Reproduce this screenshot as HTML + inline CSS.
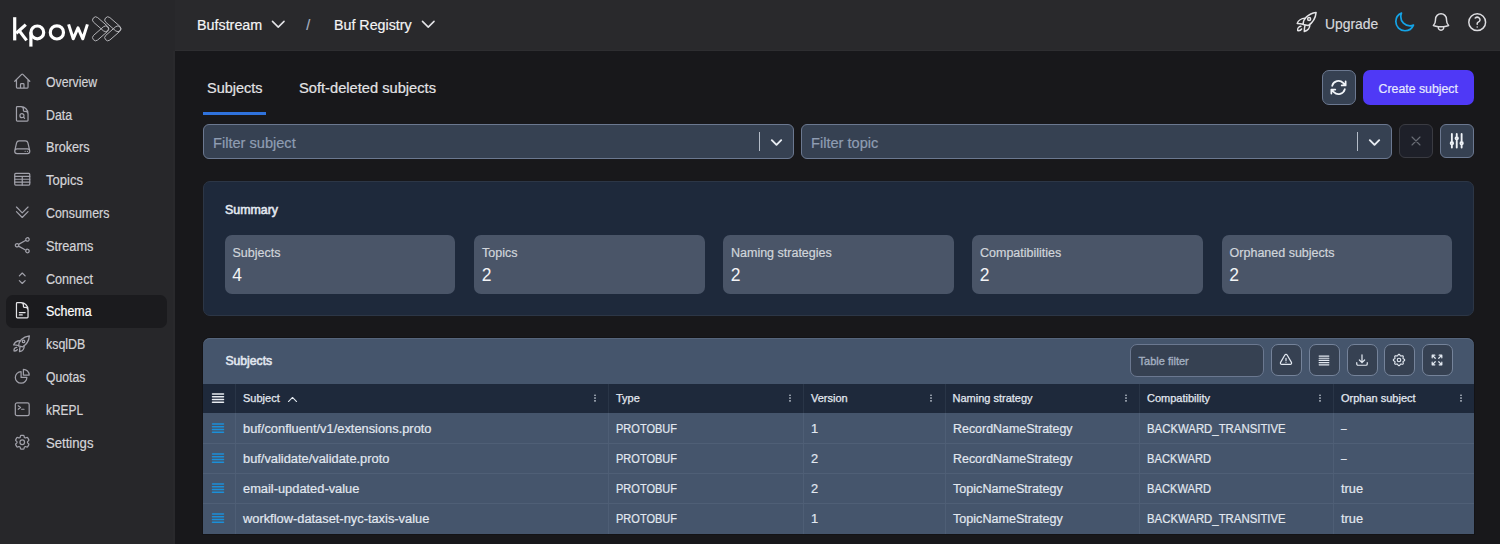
<!DOCTYPE html>
<html><head><meta charset="utf-8"><style>
*{box-sizing:border-box;margin:0;padding:0}
html,body{width:1500px;height:544px;overflow:hidden;background:#18181b;font-family:"Liberation Sans",sans-serif;}
.a{position:absolute}
.t{position:absolute;white-space:nowrap;line-height:1;-webkit-text-stroke-width:0.2px}
svg{position:absolute;overflow:visible}
.ic{fill:none;stroke-linecap:round;stroke-linejoin:round}
</style></head><body>
<div class="a" style="left:0px;top:0px;width:175px;height:544px;background:#27272a;border-radius:0px;"></div>
<div class="a" style="left:173px;top:51px;width:2px;height:493px;background:#29292c;border-radius:0px;"></div>
<div class="a" style="left:175px;top:0px;width:1325px;height:51px;background:#29292c;border-radius:0px;"></div>
<div class="a" style="left:175px;top:50px;width:1325px;height:1px;background:#2e2e31;border-radius:0px;"></div>
<svg style="left:0;top:0;width:174px;height:51px" viewBox="0 0 174 51"><g fill="none" stroke="#ffffff" stroke-width="3.2" stroke-linecap="butt" stroke-linejoin="round"><path d="M14.7 17.2V40.4"/><path d="M25.8 24.6L16.2 33.2"/><path d="M19.2 30.6L26.6 40.4"/><circle cx="37.3" cy="32.4" r="6.4"/><path d="M30.9 32.4V46.6"/><circle cx="56.9" cy="32.4" r="6.6"/><path d="M68.6 24.4L73.2 38.8L78 27.8L82.8 38.8L87.4 24.4" stroke-width="3.0"/></g><g fill="none" stroke="#b4b4b8" stroke-width="1.0"><path d="M93.57 22.24L103.57 30.94A3.1 3.1 0 0 0 107.63 26.26L97.63 17.56A3.1 3.1 0 0 0 93.57 22.24Z"/><path d="M103.57 26.66L93.57 35.36A3.1 3.1 0 0 0 97.63 40.04L107.63 31.34A3.1 3.1 0 0 0 103.57 26.66Z"/><path d="M105.77 22.24L115.77 30.94A3.1 3.1 0 0 0 119.83 26.26L109.83 17.56A3.1 3.1 0 0 0 105.77 22.24Z"/><path d="M115.77 26.66L105.77 35.36A3.1 3.1 0 0 0 109.83 40.04L119.83 31.34A3.1 3.1 0 0 0 115.77 26.66Z"/></g></svg>
<div class="a" style="left:5.5px;top:294.5px;width:161px;height:33px;background:#1b1b1e;border-radius:7px;"></div>
<div class="t" style="left:46px;top:74.85px;font-size:14px;color:#d4d4d8;font-weight:400;letter-spacing:0px;transform:scaleX(0.876);transform-origin:0 0;">Overview</div>
<svg style="left:13.05px;top:71.75px;width:18.5px;height:18.5px" viewBox="0 0 24 24" class="ic" stroke="#a1a1aa" stroke-width="1.6" ><path d="m2.25 12 8.954-8.955c.44-.439 1.152-.439 1.591 0L21.75 12M4.5 9.75v10.125c0 .621.504 1.125 1.125 1.125H9.75v-4.875c0-.621.504-1.125 1.125-1.125h2.25c.621 0 1.125.504 1.125 1.125V21h4.125c.621 0 1.125-.504 1.125-1.125V9.75M8.25 21h8.25"/></svg>
<div class="t" style="left:46px;top:107.65px;font-size:14px;color:#d4d4d8;font-weight:400;letter-spacing:0px;transform:scaleX(0.881);transform-origin:0 0;">Data</div>
<svg style="left:13.05px;top:104.75px;width:18.5px;height:18.5px" viewBox="0 0 24 24" class="ic" stroke="#a1a1aa" stroke-width="1.6" ><path d="M19.5 14.25v-2.625a3.375 3.375 0 0 0-3.375-3.375h-1.5A1.125 1.125 0 0 1 13.5 7.125v-1.5a3.375 3.375 0 0 0-3.375-3.375H8.25m5.231 13.481L15 17.25m-4.5-15H5.625c-.621 0-1.125.504-1.125 1.125v16.5c0 .621.504 1.125 1.125 1.125h12.75c.621 0 1.125-.504 1.125-1.125V11.25a9 9 0 0 0-9-9Zm3.75 11.625a2.625 2.625 0 1 1-5.25 0 2.625 2.625 0 0 1 5.25 0Z"/></svg>
<div class="t" style="left:46px;top:140.45px;font-size:14px;color:#d4d4d8;font-weight:400;letter-spacing:0px;transform:scaleX(0.903);transform-origin:0 0;">Brokers</div>
<svg style="left:13.05px;top:137.75px;width:18.5px;height:18.5px" viewBox="0 0 24 24" class="ic" stroke="#a1a1aa" stroke-width="1.6" ><path d="M21.75 17.25v-.228a4.5 4.5 0 0 0-.12-1.03l-2.268-9.64a3.375 3.375 0 0 0-3.285-2.602H7.923a3.375 3.375 0 0 0-3.285 2.602l-2.268 9.64a4.5 4.5 0 0 0-.12 1.03v.228m19.5 0a3 3 0 0 1-3 3H5.25a3 3 0 0 1-3-3m19.5 0a3 3 0 0 0-3-3H5.25a3 3 0 0 0-3 3m16.5 0h.008v.008h-.008v-.008Zm-3 0h.008v.008h-.008v-.008Z"/></svg>
<div class="t" style="left:46px;top:173.25px;font-size:14px;color:#d4d4d8;font-weight:400;letter-spacing:0px;transform:scaleX(0.93);transform-origin:0 0;">Topics</div>
<svg style="left:13.05px;top:170.25px;width:18.5px;height:18.5px" viewBox="0 0 24 24" class="ic" stroke="#a1a1aa" stroke-width="1.6" ><rect x="2.25" y="4.5" width="19.5" height="15" rx="1.2"/><path d="M2.25 8.25h19.5M2.25 12h19.5M2.25 15.75h19.5M12 8.25v11.25"/></svg>
<div class="t" style="left:46px;top:206.05px;font-size:14px;color:#d4d4d8;font-weight:400;letter-spacing:0px;transform:scaleX(0.885);transform-origin:0 0;">Consumers</div>
<svg style="left:13.05px;top:203.05px;width:18.5px;height:18.5px" viewBox="0 0 24 24" class="ic" stroke="#a1a1aa" stroke-width="1.6" ><path d="m4.5 5.25 7.5 7.5 7.5-7.5m-15 6 7.5 7.5 7.5-7.5"/></svg>
<div class="t" style="left:46px;top:238.85px;font-size:14px;color:#d4d4d8;font-weight:400;letter-spacing:0px;transform:scaleX(0.91);transform-origin:0 0;">Streams</div>
<svg style="left:13.05px;top:236.25px;width:18.5px;height:18.5px" viewBox="0 0 24 24" class="ic" stroke="#a1a1aa" stroke-width="1.6" ><path d="M7.217 10.907a2.25 2.25 0 1 0 0 2.186m0-2.186c.18.324.283.696.283 1.093s-.103.77-.283 1.093m0-2.186 9.566-5.314m-9.566 7.5 9.566 5.314m0 0a2.25 2.25 0 1 0 3.935 2.186 2.25 2.25 0 0 0-3.935-2.186Zm0-12.814a2.25 2.25 0 1 0 3.933-2.185 2.25 2.25 0 0 0-3.933 2.185Z"/></svg>
<div class="t" style="left:46px;top:271.65px;font-size:14px;color:#d4d4d8;font-weight:400;letter-spacing:0px;transform:scaleX(0.9);transform-origin:0 0;">Connect</div>
<svg style="left:13.05px;top:269.15px;width:18.5px;height:18.5px" viewBox="0 0 24 24" class="ic" stroke="#a1a1aa" stroke-width="1.6" ><path d="M8.25 15 12 18.75 15.75 15m-7.5-6L12 5.25 15.75 9"/></svg>
<div class="t" style="left:46px;top:304.45px;font-size:14px;color:#ffffff;font-weight:400;letter-spacing:0px;transform:scaleX(0.887);transform-origin:0 0;">Schema</div>
<svg style="left:13.05px;top:301.35px;width:18.5px;height:18.5px" viewBox="0 0 24 24" class="ic" stroke="#e4e4e7" stroke-width="1.6" ><path d="M19.5 14.25v-2.625a3.375 3.375 0 0 0-3.375-3.375h-1.5A1.125 1.125 0 0 1 13.5 7.125v-1.5a3.375 3.375 0 0 0-3.375-3.375H8.25m0 12.75h7.5m-7.5 3H12M10.5 2.25H5.625c-.621 0-1.125.504-1.125 1.125v17.25c0 .621.504 1.125 1.125 1.125h12.75c.621 0 1.125-.504 1.125-1.125V11.25a9 9 0 0 0-9-9Z"/></svg>
<div class="t" style="left:46px;top:337.25px;font-size:14px;color:#d4d4d8;font-weight:400;letter-spacing:0px;transform:scaleX(0.885);transform-origin:0 0;">ksqlDB</div>
<svg style="left:11.2px;top:332.5px;width:21.6px;height:21.6px" viewBox="0 0 26 26" class="ic" stroke="#a1a1aa" stroke-width="1.6" ><path d="M9.1 15.5C9 10 14 4.5 22.1 3.4C21.5 10 17.5 14.5 14.2 16.6Z"/><circle cx="15.1" cy="10.1" r="1.5"/><path d="M10.8 9.3C7.5 9.3 4.2 11.5 3.2 14.4C5.2 14.3 7.3 14.7 9.1 15.3"/><path d="M15.8 15.8C16 18.8 13.8 21.7 10.3 22.5C10.3 20.5 10.4 18.5 11 16.4"/><path d="M6.9 17.3C4.8 17.6 3.4 19.5 3.7 21.6C5.5 21.9 7 21 7.6 20"/></svg>
<div class="t" style="left:46px;top:370.05px;font-size:14px;color:#d4d4d8;font-weight:400;letter-spacing:0px;transform:scaleX(0.871);transform-origin:0 0;">Quotas</div>
<svg style="left:13.05px;top:367.35px;width:18.5px;height:18.5px" viewBox="0 0 24 24" class="ic" stroke="#a1a1aa" stroke-width="1.6" ><path d="M10.5 6a7.5 7.5 0 1 0 7.5 7.5h-7.5V6Z M13.5 10.5H21A7.5 7.5 0 0 0 13.5 3v7.5Z"/></svg>
<div class="t" style="left:46px;top:402.85px;font-size:14px;color:#d4d4d8;font-weight:400;letter-spacing:0px;transform:scaleX(0.852);transform-origin:0 0;">kREPL</div>
<svg style="left:13.05px;top:400.05px;width:18.5px;height:18.5px" viewBox="0 0 24 24" class="ic" stroke="#a1a1aa" stroke-width="1.6" ><path d="m6.75 7.5 3 2.25-3 2.25m4.5 0h3m-9 8.25h13.5A2.25 2.25 0 0 0 21 18V6a2.25 2.25 0 0 0-2.25-2.25H5.25A2.25 2.25 0 0 0 3 6v12a2.25 2.25 0 0 0 2.25 2.25Z"/></svg>
<div class="t" style="left:46px;top:435.65px;font-size:14px;color:#d4d4d8;font-weight:400;letter-spacing:0px;transform:scaleX(0.938);transform-origin:0 0;">Settings</div>
<svg style="left:13.05px;top:433.15px;width:18.5px;height:18.5px" viewBox="0 0 24 24" class="ic" stroke="#a1a1aa" stroke-width="1.6" ><path d="M9.594 3.94c.09-.542.56-.94 1.11-.94h2.593c.55 0 1.02.398 1.11.94l.213 1.281c.063.374.313.686.645.87.074.04.147.083.22.127.325.196.72.257 1.075.124l1.217-.456a1.125 1.125 0 0 1 1.37.49l1.296 2.247a1.125 1.125 0 0 1-.26 1.431l-1.003.827c-.293.241-.438.613-.43.992a7.723 7.723 0 0 1 0 .255c-.008.378.137.75.43.991l1.004.827c.424.35.534.955.26 1.43l-1.298 2.247a1.125 1.125 0 0 1-1.369.491l-1.217-.456c-.355-.133-.75-.072-1.076.124a6.47 6.47 0 0 1-.22.128c-.331.183-.581.495-.644.869l-.213 1.281c-.09.543-.56.94-1.11.94h-2.594c-.55 0-1.019-.398-1.11-.94l-.213-1.281c-.062-.374-.312-.686-.644-.87a6.52 6.52 0 0 1-.22-.127c-.325-.196-.72-.257-1.076-.124l-1.217.456a1.125 1.125 0 0 1-1.369-.49l-1.297-2.247a1.125 1.125 0 0 1 .26-1.431l1.004-.827c.292-.24.437-.613.43-.991a6.932 6.932 0 0 1 0-.255c.007-.38-.138-.751-.43-.992l-1.004-.827a1.125 1.125 0 0 1-.26-1.43l1.297-2.247a1.125 1.125 0 0 1 1.37-.491l1.216.456c.356.133.751.072 1.076-.124.072-.044.146-.086.22-.128.332-.183.582-.495.644-.869l.214-1.28Z M15 12a3 3 0 1 1-6 0 3 3 0 0 1 6 0Z"/></svg>
<div class="t" style="left:196.6px;top:17.36px;font-size:15.4px;color:#f4f4f5;font-weight:400;letter-spacing:0px;transform:scaleX(0.93);transform-origin:0 0;">Bufstream</div>
<svg style="left:269.25px;top:14.95px;width:18.5px;height:18.5px" viewBox="0 0 24 24" class="ic" stroke="#e4e4e7" stroke-width="2" ><path d="m19.5 8.25-7.5 7.5-7.5-7.5"/></svg>
<div class="t" style="left:306.3px;top:18.20px;font-size:14.3px;color:#a9b4c4;font-weight:400;letter-spacing:0px;">/</div>
<div class="t" style="left:334.4px;top:17.36px;font-size:15.4px;color:#f4f4f5;font-weight:400;letter-spacing:0px;transform:scaleX(0.926);transform-origin:0 0;">Buf Registry</div>
<svg style="left:419.05px;top:14.95px;width:18.5px;height:18.5px" viewBox="0 0 24 24" class="ic" stroke="#e4e4e7" stroke-width="2" ><path d="m19.5 8.25-7.5 7.5-7.5-7.5"/></svg>
<svg style="left:1294px;top:9px;width:26px;height:26px" viewBox="0 0 26 26" class="ic" stroke="#e4e4e7" stroke-width="1.5" ><path d="M9.1 15.5C9 10 14 4.5 22.1 3.4C21.5 10 17.5 14.5 14.2 16.6Z"/><circle cx="15.1" cy="10.1" r="1.5"/><path d="M10.8 9.3C7.5 9.3 4.2 11.5 3.2 14.4C5.2 14.3 7.3 14.7 9.1 15.3"/><path d="M15.8 15.8C16 18.8 13.8 21.7 10.3 22.5C10.3 20.5 10.4 18.5 11 16.4"/><path d="M6.9 17.3C4.8 17.6 3.4 19.5 3.7 21.6C5.5 21.9 7 21 7.6 20"/></svg>
<div class="t" style="left:1325px;top:15.76px;font-size:15.4px;color:#d8d8dc;font-weight:400;letter-spacing:0px;transform:scaleX(0.903);transform-origin:0 0;">Upgrade</div>
<svg style="left:1392.9px;top:10.8px;width:22.6px;height:22.6px" viewBox="0 0 24 24" class="ic" stroke="#14a3e6" stroke-width="1.8" ><path d="M21.752 15.002A9.72 9.72 0 0 1 18 15.75c-5.385 0-9.75-4.365-9.75-9.75 0-1.33.266-2.597.748-3.752A9.753 9.753 0 0 0 3 11.25C3 16.635 7.365 21 12.75 21a9.753 9.753 0 0 0 9.002-5.998Z"/></svg>
<svg style="left:1430.15px;top:11.15px;width:22px;height:22px" viewBox="0 0 24 24" class="ic" stroke="#dcdce0" stroke-width="1.6" ><path d="M14.857 17.082a23.848 23.848 0 0 0 5.454-1.31A8.967 8.967 0 0 1 18 9.75V9A6 6 0 0 0 6 9v.75a8.967 8.967 0 0 1-2.312 6.022c1.733.64 3.56 1.085 5.455 1.31m5.714 0a24.255 24.255 0 0 1-5.714 0m5.714 0a3 3 0 1 1-5.714 0"/></svg>
<svg style="left:1466.2px;top:10.95px;width:22.4px;height:22.4px" viewBox="0 0 24 24" class="ic" stroke="#dcdce0" stroke-width="1.6" ><path d="M9.879 7.519c1.171-1.025 3.071-1.025 4.242 0 1.172 1.025 1.172 2.687 0 3.712-.203.179-.43.326-.67.442-.745.361-1.45.999-1.45 1.827v.75M21 12a9 9 0 1 1-18 0 9 9 0 0 1 18 0Zm-9 5.25h.008v.008H12v-.008Z"/></svg>
<div class="t" style="left:206.8px;top:80.16px;font-size:15.4px;color:#e4e4e7;font-weight:400;letter-spacing:0px;transform:scaleX(0.939);transform-origin:0 0;">Subjects</div>
<div class="t" style="left:299.1px;top:80.36px;font-size:15.4px;color:#e4e4e7;font-weight:400;letter-spacing:0px;transform:scaleX(0.953);transform-origin:0 0;">Soft-deleted subjects</div>
<div class="a" style="left:203px;top:112px;width:63px;height:2.5px;background:#2f72dc;border-radius:0px;"></div>
<div class="a" style="left:1321.5px;top:70px;width:34.5px;height:35px;background:#364152;border-radius:7px;border:1px solid #6b7890;"></div>
<svg style="left:1329.2px;top:78px;width:19px;height:19px" viewBox="0 0 24 24" class="ic" stroke="#f1f5f9" stroke-width="2.2" ><path d="M16.023 9.348h4.992v-.001M2.985 19.644v-4.992m0 0h4.992m-4.993 0 3.181 3.183a8.25 8.25 0 0 0 13.803-3.7M4.031 9.865a8.25 8.25 0 0 1 13.803-3.7l3.181 3.182m0-4.991v4.99"/></svg>
<div class="a" style="left:1363px;top:70px;width:110.5px;height:35px;background:#4f39f6;border-radius:7px;"></div>
<div class="t" style="left:1378.6px;top:82.69px;font-size:12.3px;color:#e6e9ff;font-weight:400;letter-spacing:0px;">Create subject</div>
<div class="a" style="left:203px;top:124px;width:590.5px;height:35px;background:#364152;border-radius:6px;border:1px solid #6b7890;"></div>
<div class="t" style="left:213px;top:135.74px;font-size:14.6px;color:#8f9db2;font-weight:400;letter-spacing:0px;">Filter subject</div>
<div class="a" style="left:758.8px;top:132px;width:1.5px;height:19px;background:#b4bcc8;border-radius:0px;"></div>
<svg style="left:769px;top:134.5px;width:15px;height:15px" viewBox="0 0 24 24" class="ic" stroke="#e8ecf2" stroke-width="3.1" ><path d="m19.5 8.25-7.5 7.5-7.5-7.5"/></svg>
<div class="a" style="left:801px;top:124px;width:590.5px;height:35px;background:#364152;border-radius:6px;border:1px solid #6b7890;"></div>
<div class="t" style="left:811px;top:135.74px;font-size:14.6px;color:#8f9db2;font-weight:400;letter-spacing:0px;">Filter topic</div>
<div class="a" style="left:1356.8px;top:132px;width:1.5px;height:19px;background:#b4bcc8;border-radius:0px;"></div>
<svg style="left:1367px;top:134.5px;width:15px;height:15px" viewBox="0 0 24 24" class="ic" stroke="#e8ecf2" stroke-width="3.1" ><path d="m19.5 8.25-7.5 7.5-7.5-7.5"/></svg>
<div class="a" style="left:1398.6px;top:124.3px;width:34px;height:34px;background:#1e2029;border-radius:6px;border:1px solid #3a3b42;"></div>
<svg style="left:1407.6px;top:133px;width:16px;height:16px" viewBox="0 0 24 24" class="ic" stroke="#6a6d75" stroke-width="1.6" ><path d="M6 18 18 6M6 6l12 12"/></svg>
<div class="a" style="left:1440px;top:124.3px;width:34px;height:34px;background:#364152;border-radius:6px;border:1px solid #6b7890;"></div>
<svg style="left:1447.45px;top:131.15px;width:19.5px;height:19.5px" viewBox="0 0 24 24" class="ic" stroke="#eef2f6" stroke-width="2.3" ><path d="M6 13.5V3.75m0 9.75a1.5 1.5 0 0 1 0 3m0-3a1.5 1.5 0 0 0 0 3m0 3.75V16.5m12-3V3.75m0 9.75a1.5 1.5 0 0 1 0 3m0-3a1.5 1.5 0 0 0 0 3m0 3.75V16.5m-6-9V3.75m0 3.75a1.5 1.5 0 0 1 0 3m0-3a1.5 1.5 0 0 0 0 3m0 9.75V10.5"/></svg>
<div class="a" style="left:203px;top:181px;width:1271px;height:135px;background:#1e293b;border-radius:7px;border:1px solid #2c3646;"></div>
<div class="t" style="left:225px;top:204.00px;font-size:12.4px;color:#e2e8f0;font-weight:400;letter-spacing:0px;-webkit-text-stroke-width:0.55px;">Summary</div>
<div class="a" style="left:224.5px;top:235.2px;width:230.5px;height:58.8px;background:#4a5568;border-radius:7px;"></div>
<div class="t" style="left:232.5px;top:246.72px;font-size:12.5px;color:#d1d5db;font-weight:400;letter-spacing:0px;">Subjects</div>
<div class="t" style="left:232.2px;top:266.69px;font-size:17.5px;color:#f3f4f6;font-weight:400;letter-spacing:0px;-webkit-text-stroke-width:0;">4</div>
<div class="a" style="left:474px;top:235.2px;width:230.5px;height:58.8px;background:#4a5568;border-radius:7px;"></div>
<div class="t" style="left:482px;top:246.72px;font-size:12.5px;color:#d1d5db;font-weight:400;letter-spacing:0px;">Topics</div>
<div class="t" style="left:481.7px;top:266.69px;font-size:17.5px;color:#f3f4f6;font-weight:400;letter-spacing:0px;-webkit-text-stroke-width:0;">2</div>
<div class="a" style="left:723px;top:235.2px;width:230.5px;height:58.8px;background:#4a5568;border-radius:7px;"></div>
<div class="t" style="left:731px;top:246.72px;font-size:12.5px;color:#d1d5db;font-weight:400;letter-spacing:0px;">Naming strategies</div>
<div class="t" style="left:730.7px;top:266.69px;font-size:17.5px;color:#f3f4f6;font-weight:400;letter-spacing:0px;-webkit-text-stroke-width:0;">2</div>
<div class="a" style="left:972px;top:235.2px;width:230.5px;height:58.8px;background:#4a5568;border-radius:7px;"></div>
<div class="t" style="left:980px;top:246.72px;font-size:12.5px;color:#d1d5db;font-weight:400;letter-spacing:0px;">Compatibilities</div>
<div class="t" style="left:979.7px;top:266.69px;font-size:17.5px;color:#f3f4f6;font-weight:400;letter-spacing:0px;-webkit-text-stroke-width:0;">2</div>
<div class="a" style="left:1221.6px;top:235.2px;width:230.5px;height:58.8px;background:#4a5568;border-radius:7px;"></div>
<div class="t" style="left:1229.6px;top:246.72px;font-size:12.5px;color:#d1d5db;font-weight:400;letter-spacing:0px;">Orphaned subjects</div>
<div class="t" style="left:1229.3px;top:266.69px;font-size:17.5px;color:#f3f4f6;font-weight:400;letter-spacing:0px;-webkit-text-stroke-width:0;">2</div>
<div class="a" style="left:203px;top:338px;width:1271px;height:196px;background:#45556c;border-radius:7px 7px 0 0;overflow:hidden;box-shadow:inset 0 1px 0 #56657c,0 0 0 1px rgba(0,0,0,0.18)"></div>
<div class="t" style="left:225.4px;top:354.97px;font-size:12.2px;color:#e2e8f0;font-weight:400;letter-spacing:0px;-webkit-text-stroke-width:0.55px;">Subjects</div>
<div class="a" style="left:1130px;top:344px;width:134px;height:32.5px;background:#364152;border-radius:7px;border:1px solid #6b7890;"></div>
<div class="t" style="left:1138.6px;top:355.69px;font-size:11px;color:#a3afc0;font-weight:400;letter-spacing:0px;-webkit-text-stroke-width:0.35px;">Table filter</div>
<div class="a" style="left:1271px;top:344.2px;width:31px;height:31.5px;background:#364152;border-radius:7px;border:1.4px solid #75839a;"></div>
<svg style="left:1279.3px;top:353px;width:14px;height:14px" viewBox="0 0 24 24" class="ic" stroke="#e2e8f0" stroke-width="2.1" ><path d="M12 9v3.75m-9.303 3.376c-.866 1.5.217 3.374 1.948 3.374h14.71c1.73 0 2.813-1.874 1.948-3.374L13.949 3.378c-.866-1.5-3.032-1.5-3.898 0L2.697 16.126ZM12 15.75h.007v.008H12v-.008Z"/></svg>
<div class="a" style="left:1308.7px;top:344.2px;width:31px;height:31.5px;background:#364152;border-radius:7px;border:1.4px solid #75839a;"></div>
<svg style="left:1317.0px;top:353px;width:14px;height:14px" viewBox="0 0 24 24" class="ic" stroke="#e2e8f0" stroke-width="2.1" ><path d="M3.75 5.25h16.5M3.75 9h16.5M3.75 12.75h16.5M3.75 16.5h16.5M3.75 20.25h16.5"/></svg>
<div class="a" style="left:1346.7px;top:344.2px;width:31px;height:31.5px;background:#364152;border-radius:7px;border:1.4px solid #75839a;"></div>
<svg style="left:1355.0px;top:353px;width:14px;height:14px" viewBox="0 0 24 24" class="ic" stroke="#e2e8f0" stroke-width="2.1" ><path d="M3 16.5v2.25A2.25 2.25 0 0 0 5.25 21h13.5A2.25 2.25 0 0 0 21 18.75V16.5M16.5 12 12 16.5m0 0L7.5 12m4.5 4.5V3"/></svg>
<div class="a" style="left:1384px;top:344.2px;width:31px;height:31.5px;background:#364152;border-radius:7px;border:1.4px solid #75839a;"></div>
<svg style="left:1392.3px;top:353px;width:14px;height:14px" viewBox="0 0 24 24" class="ic" stroke="#e2e8f0" stroke-width="2" ><path d="M21.70 12.00L21.64 12.38L21.46 12.74L21.18 13.09L20.83 13.40L20.43 13.68L20.03 13.93L19.65 14.16L19.33 14.38L19.09 14.61L18.93 14.87L18.86 15.16L18.87 15.50L18.94 15.89L19.04 16.32L19.15 16.78L19.23 17.25L19.26 17.72L19.22 18.16L19.08 18.55L18.86 18.86L18.55 19.08L18.16 19.22L17.72 19.26L17.25 19.23L16.78 19.15L16.32 19.04L15.89 18.94L15.50 18.87L15.16 18.86L14.87 18.93L14.61 19.09L14.38 19.33L14.16 19.65L13.93 20.03L13.68 20.43L13.40 20.83L13.09 21.18L12.74 21.46L12.38 21.64L12.00 21.70L11.62 21.64L11.26 21.46L10.91 21.18L10.60 20.83L10.32 20.43L10.07 20.03L9.84 19.65L9.62 19.33L9.39 19.09L9.13 18.93L8.84 18.86L8.50 18.87L8.11 18.94L7.68 19.04L7.22 19.15L6.75 19.23L6.28 19.26L5.84 19.22L5.45 19.08L5.14 18.86L4.92 18.55L4.78 18.16L4.74 17.72L4.77 17.25L4.85 16.78L4.96 16.32L5.06 15.89L5.13 15.50L5.14 15.16L5.07 14.87L4.91 14.61L4.67 14.38L4.35 14.16L3.97 13.93L3.57 13.68L3.17 13.40L2.82 13.09L2.54 12.74L2.36 12.38L2.30 12.00L2.36 11.62L2.54 11.26L2.82 10.91L3.17 10.60L3.57 10.32L3.97 10.07L4.35 9.84L4.67 9.62L4.91 9.39L5.07 9.13L5.14 8.84L5.13 8.50L5.06 8.11L4.96 7.68L4.85 7.22L4.77 6.75L4.74 6.28L4.78 5.84L4.92 5.45L5.14 5.14L5.45 4.92L5.84 4.78L6.28 4.74L6.75 4.77L7.22 4.85L7.68 4.96L8.11 5.06L8.50 5.13L8.84 5.14L9.13 5.07L9.39 4.91L9.62 4.67L9.84 4.35L10.07 3.97L10.32 3.57L10.60 3.17L10.91 2.82L11.26 2.54L11.62 2.36L12.00 2.30L12.38 2.36L12.74 2.54L13.09 2.82L13.40 3.17L13.68 3.57L13.93 3.97L14.16 4.35L14.38 4.67L14.61 4.91L14.87 5.07L15.16 5.14L15.50 5.13L15.89 5.06L16.32 4.96L16.78 4.85L17.25 4.77L17.72 4.74L18.16 4.78L18.55 4.92L18.86 5.14L19.08 5.45L19.22 5.84L19.26 6.28L19.23 6.75L19.15 7.22L19.04 7.68L18.94 8.11L18.87 8.50L18.86 8.84L18.93 9.13L19.09 9.39L19.33 9.62L19.65 9.84L20.03 10.07L20.43 10.32L20.83 10.60L21.18 10.91L21.46 11.26L21.64 11.62L21.70 12.00Z"/><circle cx="12" cy="12" r="3"/></svg>
<div class="a" style="left:1422px;top:344.2px;width:31px;height:31.5px;background:#364152;border-radius:7px;border:1.4px solid #75839a;"></div>
<svg style="left:1430.3px;top:353px;width:14px;height:14px" viewBox="0 0 24 24" class="ic" stroke="#e2e8f0" stroke-width="2.1" ><path d="M3.75 3.75v4.5m0-4.5h4.5m-4.5 0L9 9M3.75 20.25v-4.5m0 4.5h4.5m-4.5 0L9 15M20.25 3.75h-4.5m4.5 0v4.5m0-4.5L15 9m5.25 11.25h-4.5m4.5 0v-4.5m0 4.5L15 15"/></svg>
<div class="a" style="left:203px;top:383.5px;width:1271px;height:29.5px;background:#1e293b;border-radius:0px;"></div>
<div class="a" style="left:235px;top:383.5px;width:1px;height:150px;background:rgba(200,215,235,0.07);border-radius:0px;"></div>
<div class="a" style="left:608px;top:383.5px;width:1px;height:150px;background:rgba(200,215,235,0.07);border-radius:0px;"></div>
<div class="a" style="left:803px;top:383.5px;width:1px;height:150px;background:rgba(200,215,235,0.07);border-radius:0px;"></div>
<div class="a" style="left:944.5px;top:383.5px;width:1px;height:150px;background:rgba(200,215,235,0.07);border-radius:0px;"></div>
<div class="a" style="left:1139px;top:383.5px;width:1px;height:150px;background:rgba(200,215,235,0.07);border-radius:0px;"></div>
<div class="a" style="left:1333px;top:383.5px;width:1px;height:150px;background:rgba(200,215,235,0.07);border-radius:0px;"></div>
<div class="t" style="left:243px;top:392.89px;font-size:11px;color:#e2e8f0;font-weight:400;letter-spacing:0px;-webkit-text-stroke:0.25px #e2e8f0;">Subject</div>
<div class="t" style="left:616px;top:392.89px;font-size:11px;color:#e2e8f0;font-weight:400;letter-spacing:0px;-webkit-text-stroke:0.25px #e2e8f0;">Type</div>
<div class="t" style="left:811px;top:392.89px;font-size:11px;color:#e2e8f0;font-weight:400;letter-spacing:0px;-webkit-text-stroke:0.25px #e2e8f0;">Version</div>
<div class="t" style="left:952.5px;top:392.89px;font-size:11px;color:#e2e8f0;font-weight:400;letter-spacing:0px;-webkit-text-stroke:0.25px #e2e8f0;">Naming strategy</div>
<div class="t" style="left:1147px;top:392.89px;font-size:11px;color:#e2e8f0;font-weight:400;letter-spacing:0px;-webkit-text-stroke:0.25px #e2e8f0;">Compatibility</div>
<div class="t" style="left:1341px;top:392.89px;font-size:11px;color:#e2e8f0;font-weight:400;letter-spacing:0px;-webkit-text-stroke:0.25px #e2e8f0;">Orphan subject</div>
<svg style="left:591.70px;top:392px;width:6px;height:12px" viewBox="0 0 6 12"><circle cx="3" cy="3.3" r="0.8" fill="#d5dce6"/><circle cx="3" cy="6.1" r="0.8" fill="#d5dce6"/><circle cx="3" cy="8.9" r="0.8" fill="#d5dce6"/></svg>
<svg style="left:786.70px;top:392px;width:6px;height:12px" viewBox="0 0 6 12"><circle cx="3" cy="3.3" r="0.8" fill="#d5dce6"/><circle cx="3" cy="6.1" r="0.8" fill="#d5dce6"/><circle cx="3" cy="8.9" r="0.8" fill="#d5dce6"/></svg>
<svg style="left:928.20px;top:392px;width:6px;height:12px" viewBox="0 0 6 12"><circle cx="3" cy="3.3" r="0.8" fill="#d5dce6"/><circle cx="3" cy="6.1" r="0.8" fill="#d5dce6"/><circle cx="3" cy="8.9" r="0.8" fill="#d5dce6"/></svg>
<svg style="left:1122.70px;top:392px;width:6px;height:12px" viewBox="0 0 6 12"><circle cx="3" cy="3.3" r="0.8" fill="#d5dce6"/><circle cx="3" cy="6.1" r="0.8" fill="#d5dce6"/><circle cx="3" cy="8.9" r="0.8" fill="#d5dce6"/></svg>
<svg style="left:1316.70px;top:392px;width:6px;height:12px" viewBox="0 0 6 12"><circle cx="3" cy="3.3" r="0.8" fill="#d5dce6"/><circle cx="3" cy="6.1" r="0.8" fill="#d5dce6"/><circle cx="3" cy="8.9" r="0.8" fill="#d5dce6"/></svg>
<svg style="left:1457.70px;top:392px;width:6px;height:12px" viewBox="0 0 6 12"><circle cx="3" cy="3.3" r="0.8" fill="#d5dce6"/><circle cx="3" cy="6.1" r="0.8" fill="#d5dce6"/><circle cx="3" cy="8.9" r="0.8" fill="#d5dce6"/></svg>
<svg style="left:285.5px;top:392.5px;width:13px;height:13px" viewBox="0 0 24 24" class="ic" stroke="#e2e8f0" stroke-width="2" ><path d="m4.5 15.75 7.5-7.5 7.5 7.5"/></svg>
<svg style="left:212px;top:393px;width:12px;height:11px" viewBox="0 0 12 11" class="ic" stroke="#e8ecf1" stroke-width="1.5" ><path d="M0.5 0.9H11.5M0.5 3.65H11.5M0.5 6.4H11.5M0.5 9.15H11.5"/></svg>
<svg style="left:212px;top:423.1px;width:12px;height:11px" viewBox="0 0 12 11" class="ic" stroke="#1b8fd8" stroke-width="1.5" ><path d="M0.5 0.9H11.5M0.5 3.65H11.5M0.5 6.4H11.5M0.5 9.15H11.5"/></svg>
<div class="t" style="left:243px;top:422.72px;font-size:12.85px;color:#e2e8f0;font-weight:400;letter-spacing:0px;">buf/confluent/v1/extensions.proto</div>
<div class="t" style="left:616px;top:422.72px;font-size:12.85px;color:#e2e8f0;font-weight:400;letter-spacing:0px;transform:scaleX(0.858);transform-origin:0 0;">PROTOBUF</div>
<div class="t" style="left:811px;top:422.72px;font-size:12.85px;color:#e2e8f0;font-weight:400;letter-spacing:0px;">1</div>
<div class="t" style="left:952.5px;top:422.72px;font-size:12.85px;color:#e2e8f0;font-weight:400;letter-spacing:0px;transform:scaleX(0.968);transform-origin:0 0;">RecordNameStrategy</div>
<div class="t" style="left:1147px;top:422.72px;font-size:12.85px;color:#e2e8f0;font-weight:400;letter-spacing:0px;transform:scaleX(0.886);transform-origin:0 0;">BACKWARD_TRANSITIVE</div>
<div class="t" style="left:1341px;top:422.72px;font-size:12.85px;color:#e2e8f0;font-weight:400;letter-spacing:0px;transform:scaleX(0.78);transform-origin:0 0;">–</div>
<div class="a" style="left:203px;top:443.1px;width:1271px;height:1px;background:#4f5f76;border-radius:0px;"></div>
<svg style="left:212px;top:453.20000000000005px;width:12px;height:11px" viewBox="0 0 12 11" class="ic" stroke="#1b8fd8" stroke-width="1.5" ><path d="M0.5 0.9H11.5M0.5 3.65H11.5M0.5 6.4H11.5M0.5 9.15H11.5"/></svg>
<div class="t" style="left:243px;top:452.82px;font-size:12.85px;color:#e2e8f0;font-weight:400;letter-spacing:0px;">buf/validate/validate.proto</div>
<div class="t" style="left:616px;top:452.82px;font-size:12.85px;color:#e2e8f0;font-weight:400;letter-spacing:0px;transform:scaleX(0.858);transform-origin:0 0;">PROTOBUF</div>
<div class="t" style="left:811px;top:452.82px;font-size:12.85px;color:#e2e8f0;font-weight:400;letter-spacing:0px;">2</div>
<div class="t" style="left:952.5px;top:452.82px;font-size:12.85px;color:#e2e8f0;font-weight:400;letter-spacing:0px;transform:scaleX(0.968);transform-origin:0 0;">RecordNameStrategy</div>
<div class="t" style="left:1147px;top:452.82px;font-size:12.85px;color:#e2e8f0;font-weight:400;letter-spacing:0px;transform:scaleX(0.87);transform-origin:0 0;">BACKWARD</div>
<div class="t" style="left:1341px;top:452.82px;font-size:12.85px;color:#e2e8f0;font-weight:400;letter-spacing:0px;transform:scaleX(0.78);transform-origin:0 0;">–</div>
<div class="a" style="left:203px;top:473.2px;width:1271px;height:1px;background:#4f5f76;border-radius:0px;"></div>
<svg style="left:212px;top:483.3px;width:12px;height:11px" viewBox="0 0 12 11" class="ic" stroke="#1b8fd8" stroke-width="1.5" ><path d="M0.5 0.9H11.5M0.5 3.65H11.5M0.5 6.4H11.5M0.5 9.15H11.5"/></svg>
<div class="t" style="left:243px;top:482.92px;font-size:12.85px;color:#e2e8f0;font-weight:400;letter-spacing:0px;">email-updated-value</div>
<div class="t" style="left:616px;top:482.92px;font-size:12.85px;color:#e2e8f0;font-weight:400;letter-spacing:0px;transform:scaleX(0.858);transform-origin:0 0;">PROTOBUF</div>
<div class="t" style="left:811px;top:482.92px;font-size:12.85px;color:#e2e8f0;font-weight:400;letter-spacing:0px;">2</div>
<div class="t" style="left:952.5px;top:482.92px;font-size:12.85px;color:#e2e8f0;font-weight:400;letter-spacing:0px;transform:scaleX(0.98);transform-origin:0 0;">TopicNameStrategy</div>
<div class="t" style="left:1147px;top:482.92px;font-size:12.85px;color:#e2e8f0;font-weight:400;letter-spacing:0px;transform:scaleX(0.87);transform-origin:0 0;">BACKWARD</div>
<div class="t" style="left:1341px;top:482.92px;font-size:12.85px;color:#e2e8f0;font-weight:400;letter-spacing:0px;">true</div>
<div class="a" style="left:203px;top:503.3px;width:1271px;height:1px;background:#4f5f76;border-radius:0px;"></div>
<svg style="left:212px;top:513.4px;width:12px;height:11px" viewBox="0 0 12 11" class="ic" stroke="#1b8fd8" stroke-width="1.5" ><path d="M0.5 0.9H11.5M0.5 3.65H11.5M0.5 6.4H11.5M0.5 9.15H11.5"/></svg>
<div class="t" style="left:243px;top:513.02px;font-size:12.85px;color:#e2e8f0;font-weight:400;letter-spacing:0px;">workflow-dataset-nyc-taxis-value</div>
<div class="t" style="left:616px;top:513.02px;font-size:12.85px;color:#e2e8f0;font-weight:400;letter-spacing:0px;transform:scaleX(0.858);transform-origin:0 0;">PROTOBUF</div>
<div class="t" style="left:811px;top:513.02px;font-size:12.85px;color:#e2e8f0;font-weight:400;letter-spacing:0px;">1</div>
<div class="t" style="left:952.5px;top:513.02px;font-size:12.85px;color:#e2e8f0;font-weight:400;letter-spacing:0px;transform:scaleX(0.98);transform-origin:0 0;">TopicNameStrategy</div>
<div class="t" style="left:1147px;top:513.02px;font-size:12.85px;color:#e2e8f0;font-weight:400;letter-spacing:0px;transform:scaleX(0.886);transform-origin:0 0;">BACKWARD_TRANSITIVE</div>
<div class="t" style="left:1341px;top:513.02px;font-size:12.85px;color:#e2e8f0;font-weight:400;letter-spacing:0px;">true</div>
</body></html>
